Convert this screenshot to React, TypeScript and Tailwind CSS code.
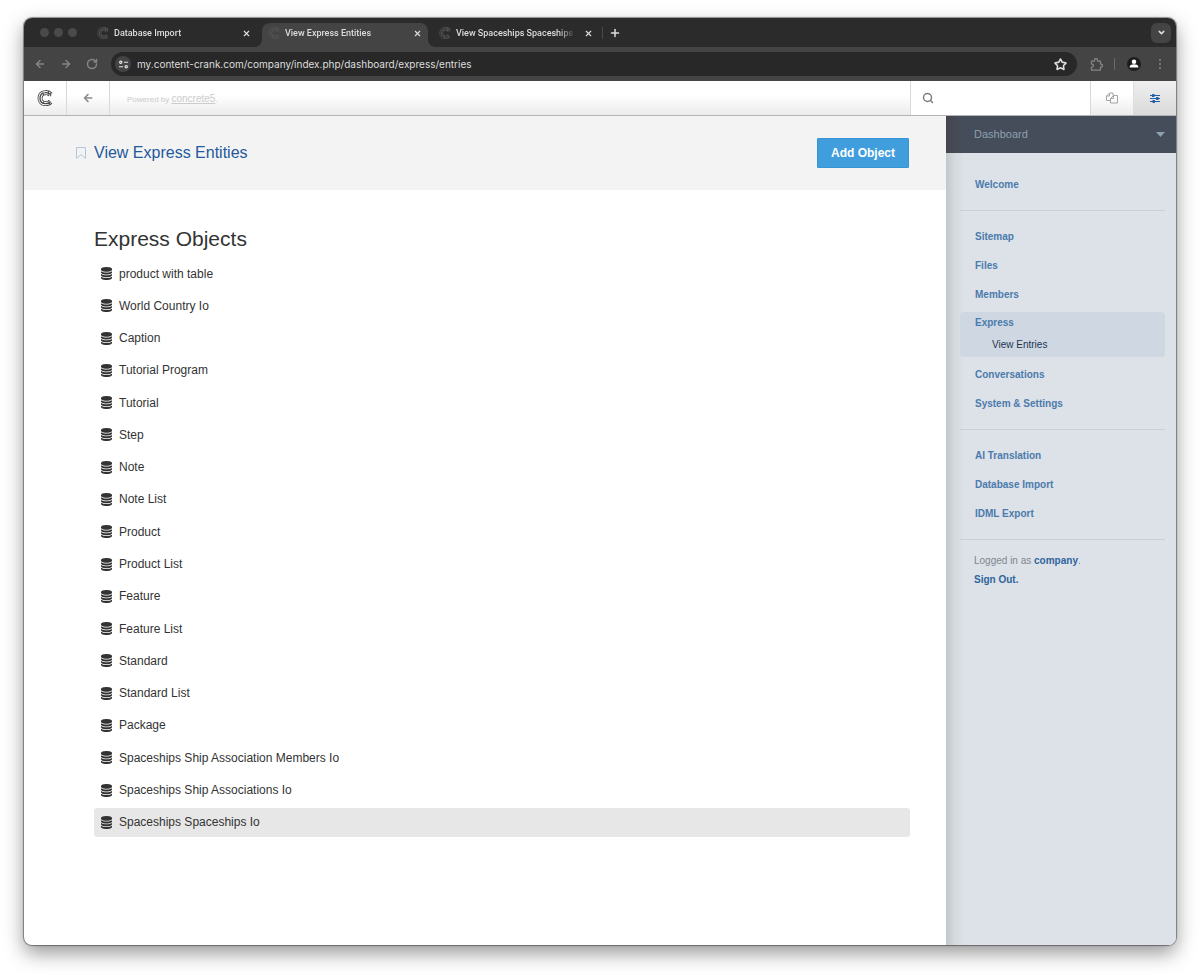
import { useState } from 'react';
import { ArrowLeft, ArrowRight, ChevronDown, Plus, RotateCw, Search, Star, X } from 'lucide-react';
import { FaArrowLeft } from 'react-icons/fa';

interface LogoProps {
  className?: string;
  line: string;
  fill: string;
}

interface TabProps {
  title: string;
  active?: boolean;
}

interface SideLinkProps {
  label: string;
}

const tabs = ['Database Import', 'View Express Entities', 'View Spaceships Spaceships'];

const objects = [
  'product with table',
  'World Country Io',
  'Caption',
  'Tutorial Program',
  'Tutorial',
  'Step',
  'Note',
  'Note List',
  'Product',
  'Product List',
  'Feature',
  'Feature List',
  'Standard',
  'Standard List',
  'Package',
  'Spaceships Ship Association Members Io',
  'Spaceships Ship Associations Io',
  'Spaceships Spaceships Io',
];

function CrankLogo({ className, line, fill }: LogoProps) {
  const c = 'M41 14 C36 8 30 7 24 8 C14 9 9 16 9 25 C9 35 16 41 26 41 C32 41 37 39 41 35';
  return (
    <svg viewBox="0 0 48 48" fill="none" className={className} aria-hidden="true">
      <path d={c} stroke={line} strokeWidth="15" />
      <path d={c} stroke={fill} strokeWidth="10" />
      <path d={c} stroke={line} strokeWidth="4" />
      <path d="M35 3 L33 18 M41 8 V19 M16 8 L20 15 M17 40 L22 33 M35 30 L38 43" stroke={line} strokeWidth="3" />
    </svg>
  );
}

function DatabaseIcon() {
  return (
    <svg viewBox="0 0 1536 1792" fill="currentColor" className="h-[13px] w-[11px] shrink-0" aria-hidden="true">
      <path d="M768 768q237 0 443-43t325-127v170q0 69-103 128t-280 93.5-385 34.5-385-34.5-280-93.5-103-128v-170q119 84 325 127t443 43zM768 1536q237 0 443-43t325-127v170q0 69-103 128t-280 93.5-385 34.5-385-34.5-280-93.5-103-128v-170q119 84 325 127t443 43zM768 1152q237 0 443-43t325-127v170q0 69-103 128t-280 93.5-385 34.5-385-34.5-280-93.5-103-128v-170q119 84 325 127t443 43zM768 0q208 0 385 34.5t280 93.5 103 128v128q0 69-103 128t-280 93.5-385 34.5-385-34.5-280-93.5-103-128v-128q0-69 103-128t280-93.5 385-34.5z" />
    </svg>
  );
}

function PuzzleIcon() {
  return (
    <svg viewBox="0 0 26 26" fill="none" stroke="currentColor" strokeWidth="2.5" strokeLinejoin="round" className="size-[13px]" aria-hidden="true">
      <path d="M3 6h6V4a3 3 0 0 1 6 0v2h6v6h1a3 3 0 0 1 0 6h-1v6H3v-6h1a3 3 0 0 0 0-6H3z" />
    </svg>
  );
}

function PagesIcon() {
  return (
    <svg viewBox="0 0 24 24" fill="none" stroke="currentColor" strokeWidth="2" strokeLinejoin="round" className="size-3" aria-hidden="true">
      <path d="M9 17H1V8l6-6h7v5" />
      <path d="M7 2v6H1" />
      <path d="M15 7h8v15H9v-9z" />
      <path d="M15 7v6H9" />
    </svg>
  );
}

function SlidersIcon() {
  return (
    <svg viewBox="0 0 20 18" fill="currentColor" className="h-[9px] w-2.5" aria-hidden="true">
      <path d="M0 2h20v2H0zM0 8h20v2H0zM0 14h20v2H0z" />
      <rect x="4" y="0" width="5" height="6" rx="1" />
      <rect x="12" y="6" width="5" height="6" rx="1" />
      <rect x="5" y="12" width="5" height="6" rx="1" />
    </svg>
  );
}

function BrowserTab({ title, active }: TabProps) {
  return (
    <div
      className={`relative flex w-[166px] items-center gap-[5px] px-1.5 pb-1 ${active ? 'rounded-t-lg bg-[#444444]' : ''}`}
    >
      {active && (
        <>
          <span className="absolute bottom-0 -left-2 size-2 bg-[radial-gradient(circle_at_0_0,#2b2b2b_8px,#444444_8px)]" />
          <span className="absolute -right-2 bottom-0 size-2 bg-[radial-gradient(circle_at_100%_0,#2b2b2b_8px,#444444_8px)]" />
        </>
      )}
      <CrankLogo className="size-3 shrink-0" line={active ? '#555555' : '#5a5a5a'} fill={active ? '#444444' : '#2b2b2b'} />
      <button
        type="button"
        className="w-[120px] mask-r-from-85% text-left font-[Roboto,sans-serif] text-[9px] leading-3 font-medium whitespace-nowrap text-[#dddddd]"
      >
        {title}
      </button>
      <button type="button" aria-label={`Close ${title}`} className="ml-auto text-[#dddddd]">
        <X className="size-[9px]" strokeWidth={3} />
      </button>
    </div>
  );
}

function SideLink({ label }: SideLinkProps) {
  return (
    <li>
      <a href="#" className="block px-[15px] leading-[29px] font-bold text-[#4b7bac] hover:underline">
        {label}
      </a>
    </li>
  );
}

function BrowserChrome() {
  const [url, setUrl] = useState('my.content-crank.com/company/index.php/dashboard/express/entries');

  return (
    <header className="font-[Inter,sans-serif]">
      <div className="flex h-[29px] items-stretch bg-[#2b2b2b] pr-[5px]">
        <div className="flex items-center gap-[5px] pr-[14px] pl-4">
          <span className="size-[9px] rounded-full bg-[#4a4a4a]" />
          <span className="size-[9px] rounded-full bg-[#4a4a4a]" />
          <span className="size-[9px] rounded-full bg-[#4a4a4a]" />
        </div>
        <div className="flex gap-[5px] pt-[5px]">
          {tabs.map((title, i) => (
            <BrowserTab key={title} title={title} active={i === 1} />
          ))}
        </div>
        <div className="flex items-center gap-1.5 pl-[3px]">
          <span className="h-3 w-px bg-[#4a4a4a]" />
          <button type="button" aria-label="New tab" className="text-[#dddddd]">
            <Plus className="size-3" strokeWidth={3} />
          </button>
        </div>
        <button
          type="button"
          aria-label="Search tabs"
          className="my-auto ml-auto flex size-5 items-center justify-center rounded-md bg-[#444444] text-[#dddddd]"
        >
          <ChevronDown className="size-[9px]" strokeWidth={4} />
        </button>
      </div>

      <div className="flex h-[34px] items-center bg-[#444444] pl-2.5 text-[#858585]">
        <div className="flex gap-3.5">
          <button type="button" aria-label="Back">
            <ArrowLeft className="size-3" strokeWidth={3} />
          </button>
          <button type="button" aria-label="Forward">
            <ArrowRight className="size-3" strokeWidth={3} />
          </button>
          <button type="button" aria-label="Reload">
            <RotateCw className="size-3" strokeWidth={3} />
          </button>
        </div>
        <div className="mr-[13px] ml-[13px] flex h-6 flex-1 items-center rounded-full bg-[#282828] pr-2.5 pl-1">
          <button
            type="button"
            aria-label="Site information"
            className="mr-1.5 flex size-4 items-center justify-center rounded-full bg-[#444444] text-[#e3e3e3]"
          >
            <svg viewBox="0 0 20 20" fill="none" stroke="currentColor" strokeWidth="2.6" className="size-[9px]" aria-hidden="true">
              <circle cx="4" cy="5" r="2.6" />
              <path d="M11 5h9M0 15h9" />
              <circle cx="16" cy="15" r="2.6" />
            </svg>
          </button>
          <input
            type="text"
            aria-label="Address"
            value={url}
            onChange={(e) => setUrl(e.target.value)}
            className="min-w-0 flex-1 bg-transparent text-[10px] leading-4 text-[#dedede] outline-none"
          />
          <button type="button" aria-label="Bookmark this tab" className="text-[#dddddd]">
            <Star className="size-[13px]" strokeWidth={3} />
          </button>
        </div>
        <button type="button" aria-label="Extensions">
          <PuzzleIcon />
        </button>
        <span className="mr-3 ml-[11px] h-3 w-px bg-[#6a6a6a]" />
        <button type="button" aria-label="Profile">
          <svg viewBox="0 0 28 28" className="size-3.5" aria-hidden="true">
            <circle cx="14" cy="14" r="14" fill="#1d1d1d" />
            <circle cx="14" cy="9.500" r="4.500" fill="#ffffff" />
            <path d="M5.500 21v-2c0-3 5-4.500 8.500-4.500s8.500 1.500 8.500 4.500v2z" fill="#ffffff" />
          </svg>
        </button>
        <button type="button" aria-label="Menu" className="mr-[13px] ml-4">
          <svg viewBox="0 0 12 24" fill="currentColor" className="h-3 w-1.5" aria-hidden="true">
            <circle cx="6" cy="4" r="2" />
            <circle cx="6" cy="12" r="2" />
            <circle cx="6" cy="20" r="2" />
          </svg>
        </button>
      </div>
    </header>
  );
}

function Toolbar() {
  return (
    <div className="relative z-10 flex h-[35px] border-b border-[#b3b3b3] bg-linear-to-b from-white from-40% to-[#ececec]">
      <a href="#" aria-label="Home" className="flex w-[43px] items-center justify-center border-r border-[#d9d9d9]">
        <CrankLogo className="size-4" line="#4a4a4a" fill="#ffffff" />
      </a>
      <a href="#" aria-label="Go back" className="flex w-[43px] items-center justify-center border-r border-[#d9d9d9] text-[#8a8a8a]">
        <FaArrowLeft className="size-2.5" />
      </a>
      <p className="flex-1 pl-[17px] text-[8px] leading-[35px] text-[#cccccc]">
        Powered by{' '}
        <a href="#" className="text-[10px] underline">
          concrete5
        </a>
        .
      </p>
      <label className="flex w-[181px] items-center gap-2 border-x border-[#d9d9d9] bg-white px-[11px] text-[#7d7d7d]">
        <Search className="size-3 shrink-0" strokeWidth={3} />
        <input type="search" aria-label="Search" className="min-w-0 flex-1 text-xs outline-none" />
      </label>
      <button type="button" aria-label="Pages" className="flex w-[42px] items-center justify-center text-[#a5a5a5]">
        <PagesIcon />
      </button>
      <button
        type="button"
        aria-label="Dashboard"
        className="flex w-[43px] items-center justify-center border-l border-[#dddddd] bg-linear-to-b from-[#efefef] to-[#dadada] text-[#2460a7]"
      >
        <SlidersIcon />
      </button>
    </div>
  );
}

function Sidebar() {
  return (
    <aside className="flex w-[230px] shrink-0 flex-col bg-[#dde1e8] bg-[linear-gradient(to_right,#c1c8cc,#d4dadd_9px,#dde1e8_18px)] text-[10px]">
      <button
        type="button"
        className="flex h-[37px] items-center justify-between bg-[linear-gradient(to_right,#45454f,#444d59_16px)] pr-[11px] pl-7 text-[11px] text-[#8e9fb1]"
      >
        Dashboard
        <svg viewBox="0 0 18 10" fill="currentColor" className="h-[5px] w-[9px]" aria-hidden="true">
          <path d="M0 0h18L9 10z" />
        </svg>
      </button>
      <nav className="pt-[17px] pr-[11px] pl-3.5">
        <ul>
          <SideLink label="Welcome" />
        </ul>
        <hr className="my-[11px] border-[#cccfd2]" />
        <ul>
          <SideLink label="Sitemap" />
          <SideLink label="Files" />
          <SideLink label="Members" />
          <li className="my-[3px] rounded-sm bg-[#cfd8e2]">
            <a href="#" className="block px-[15px] leading-[21px] font-bold text-[#4b7bac]">
              Express
            </a>
            <a href="#" className="block px-8 leading-6 text-[#1c3552]">
              View Entries
            </a>
          </li>
          <SideLink label="Conversations" />
          <SideLink label="System &amp; Settings" />
        </ul>
        <hr className="my-[11px] border-[#cccfd2]" />
        <ul>
          <SideLink label="AI Translation" />
          <SideLink label="Database Import" />
          <SideLink label="IDML Export" />
        </ul>
        <hr className="my-[11px] border-[#cccfd2]" />
        <p className="px-3.5 leading-[19px] text-[#7f868e]">
          Logged in as{' '}
          <a href="#" className="font-bold text-[#2f659d]">
            company
          </a>
          .
          <br />
          <a href="#" className="font-bold text-[#2f659d]">
            Sign Out.
          </a>
        </p>
      </nav>
    </aside>
  );
}

export default function App() {
  const [selected, setSelected] = useState('Spaceships Spaceships Io');

  return (
    <div className="flex min-h-screen bg-white px-6 pt-[18px] pb-[30px] font-['Liberation_Sans',Arial,sans-serif]">
      <div className="flex min-w-0 flex-1 flex-col overflow-hidden rounded-lg bg-white shadow-[0_0_1px_1px_rgba(0,0,0,0.4),0_8px_20px_rgba(0,0,0,0.42)]">
        <BrowserChrome />
        <Toolbar />
        <div className="flex flex-1">
          <main className="flex min-w-0 flex-1 flex-col">
            <div className="flex h-[74px] items-center justify-between bg-[#f3f3f3] pr-[37px] pl-[52px]">
              <h1 className="flex items-center gap-2 text-base text-[#24599b]">
                <svg viewBox="0 0 20 24" fill="none" stroke="#b9c4da" strokeWidth="2" className="h-3 w-2.5" aria-hidden="true">
                  <path d="M1 1h18v22l-9-8-9 8z" />
                </svg>
                View Express Entities
              </h1>
              <button
                type="button"
                className="rounded-[1px] border border-[#3794d6] bg-[#419edd] px-[13px] text-xs leading-7 font-bold text-white"
              >
                Add Object
              </button>
            </div>
            <section className="flex flex-1 flex-col pt-[34px] pr-9 pb-[108px] pl-[70px] text-[#333333]">
              <h2 className="mb-1.5 text-[21px] leading-[29px]">Express Objects</h2>
              <ul className="flex flex-1 flex-col justify-between">
                {objects.map((name) => (
                  <li key={name}>
                    <a
                      href="#"
                      onClick={() => setSelected(name)}
                      className={`flex h-[29px] items-center gap-[7px] rounded-[3px] px-[7px] text-xs ${
                        name === selected ? 'bg-[#e7e7e7]' : ''
                      }`}
                    >
                      <DatabaseIcon />
                      {name}
                    </a>
                  </li>
                ))}
              </ul>
            </section>
          </main>
          <Sidebar />
        </div>
      </div>
    </div>
  );
}
